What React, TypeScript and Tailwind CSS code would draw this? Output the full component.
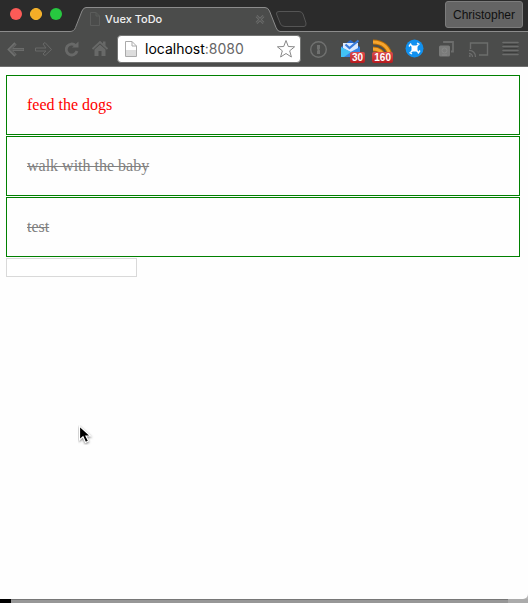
import type { ReactNode } from "react";

const todos = [
  { text: "feed the dogs", done: false },
  { text: "walk with the baby", done: true },
  { text: "test", done: true },
];

function ToolIcon({ x, width, children, badge }: { x: number; width: number; children: ReactNode; badge?: string }) {
  return (
    <span className="relative block h-[34px] shrink-0">
      <svg className="block" width={width} height={34} viewBox={`${x} 32 ${width} 34`} fill="none">
        {children}
      </svg>
      {badge && (
        <span className="absolute right-[4px] bottom-[3px] h-[11px] rounded-[2px] bg-gradient-to-b from-[#dc4a4c] to-[#b8191e] px-[2px] font-['Liberation_Sans',sans-serif] text-[10px] leading-[11px] font-bold text-white">
          {badge}
        </span>
      )}
    </span>
  );
}

function TitleBar() {
  return (
    <header className="relative flex h-8 items-start bg-[#2b2b2b]">
      <svg className="absolute inset-0" width="528" height="32" viewBox="0 0 528 32" fill="none">
        <path d="M71 32C74 31 75 29 76 27L82 11Q83.500 7.500 86 7.500H265Q268 7.500 269.500 11L276 27Q277.500 31 280 32Z" fill="#4b4c4b" />
        <path d="M0 31.500H70C73 31.500 74.500 30 75.500 27.500L82 11Q83.500 7.500 86 7.500H265Q268 7.500 269.500 11L276 27.500Q277.500 31.500 280 31.500H528" stroke="#8c8c8c" />
        <path d="M279 11.500H299Q302 11.500 303 14L306 23Q306.500 26.500 304 26.500H285Q281.500 26.500 280.500 24L276.500 14Q276 11.500 279 11.500Z" fill="#303030" stroke="#555" />
      </svg>
      <div className="relative flex w-[90px] gap-2 pt-2 pl-[10px]">
        <span className="size-3 rounded-full bg-[#fc5b57]" />
        <span className="size-3 rounded-full border border-[#fdbc2f] bg-[#f5ad27]" />
        <span className="size-3 rounded-full bg-[#27c840]" />
      </div>
      <div className="relative flex h-8 w-[175px] items-start">
        <svg className="mt-3" width="10" height="14" viewBox="0 0 10 14" fill="none" stroke="#5b5c5b">
          <path d="M.5.5H6L9.500 4V13.500H.5ZM6 .5V4H9.500" />
        </svg>
        <span className="mt-[11px] ml-[5px] text-[11px] leading-4 font-medium text-[#f1f1f1]">Vuex ToDo</span>
        <svg className="mt-[15px] ml-auto" width="10" height="9" viewBox="0 0 10 9" fill="none">
          <path d="M1.500 1L8.500 8M8.500 1L1.500 8" stroke="#6c6d6c" strokeWidth="2.600" />
          <path d="M1.500 1L8.500 8M8.500 1L1.500 8" stroke="#474847" strokeWidth="1" />
        </svg>
      </div>
      <button className="relative mt-[1px] mr-[5px] ml-auto h-[27px] w-[78px] rounded-[3px] border border-[#7c7c7c] bg-[#646464] font-['Liberation_Sans',sans-serif] text-[12px] leading-[26px] text-[#101010]">
        Christopher
      </button>
    </header>
  );
}

function Toolbar() {
  return (
    <nav className="flex h-[35px] items-start border-b border-[#707070] bg-[#4b4c4b]">
      <ToolIcon x={0} width={29}>
        <path d="M24 49.500H9.500M15.500 43.500L9.500 49.500L15.500 55.500" stroke="#6f706f" strokeWidth="3.200" />
        <path d="M23.500 49.500H10.500M15.500 44.500L10.500 49.500L15.500 54.500" stroke="#5b5c5b" strokeWidth="1.600" />
      </ToolIcon>
      <ToolIcon x={29} width={29}>
        <path d="M35.500 48H46L43 44L45 42.500L51.500 49.500L45 55.500L43 54L46 51H35.500Z" stroke="#686968" />
      </ToolIcon>
      <ToolIcon x={58} width={29}>
        <path d="M75.500 45.500A5.500 5.500 0 1 0 77 51" stroke="#686968" strokeWidth="2.800" />
        <path d="M72 47.500H78.500V41.500Z" fill="#686968" />
      </ToolIcon>
      <ToolIcon x={87} width={27}>
        <path d="M92.500 49L100 42L107.500 49" stroke="#686968" strokeWidth="1.800" />
        <path d="M94.500 49.500L100 44.500L105.500 49.500V56H101.500V51H98.500V56H94.500ZM103 41.500H105.500V46L103 44Z" fill="#686968" />
      </ToolIcon>
      <div className="mt-[3px] ml-[3px] flex h-[28px] w-[184px] shrink-0 items-center rounded-[4px] border border-[#747574] bg-white pr-[4px] pl-[7px]">
        <svg width="12" height="16" viewBox="0 0 12 16" fill="none">
          <path d="M.5 9H11.500V15H.5Z" fill="#ddd" />
          <path d="M.5.5H7L11.500 5V15.500H.5ZM7 .5V5H11.500" stroke="#aaa" />
        </svg>
        <span className="ml-[8px] text-[14px] leading-5 text-black">
          localhost<span className="text-[#666]">:8080</span>
        </span>
        <svg className="ml-auto" width="20" height="20" viewBox="0 0 20 20" fill="none">
          <path d="M10 1.500L12.300 7.500L18.600 7.800L13.700 11.800L15.400 18L10 14.500L4.600 18L6.300 11.800L1.400 7.800L7.700 7.500Z" stroke="#888" />
        </svg>
      </div>
      <ToolIcon x={301} width={34}>
        <circle cx="318.500" cy="49.500" r="7.800" stroke="#707170" strokeWidth="1.400" />
        <path d="M317 45H320V48.500L319.300 49.500L320 50.500V54H317V51L317.700 50L317 49Z" fill="#707170" />
      </ToolIcon>
      <ToolIcon x={335} width={34} badge="30">
        <path d="M341 47L350.500 40L360 47V57H341Z" fill="#2769cf" />
        <path d="M343 43H358V51L350.500 55L343 51Z" fill="#dceaff" />
        <path d="M345.500 44.500L349.500 48L358.500 40.500" stroke="#397bdc" strokeWidth="2.200" />
        <path d="M341 47L350.500 52L360 47V57H341Z" fill="#3784e3" />
        <path d="M341 47L351 52L344 57H341Z" fill="#42c2f5" />
      </ToolIcon>
      <ToolIcon x={369} width={28} badge="160">
        <path d="M373 42C383 42 389.500 48 390 57M373 49C379 49 383 52 383 57" stroke="#b96d05" strokeWidth="5" />
        <path d="M373 42C383 42 389.500 48 390 57M373 49C379 49 383 52 383 57" stroke="#f7a52e" strokeWidth="3" />
      </ToolIcon>
      <ToolIcon x={397} width={34}>
        <circle cx="414.500" cy="48.500" r="9" fill="#1191ef" />
        <rect x="411.500" y="45.500" width="6" height="6" rx="1" fill="white" />
        <path d="M410.500 44.500L418.500 52.500M418.500 44.500L410.500 52.500" stroke="white" strokeWidth="1.400" />
        <path d="M409 46.500L411 43.500M417 43L419.500 44.500M420 50.500L418 53.500M412 54L409.500 52.500" stroke="white" strokeWidth="1.400" />
      </ToolIcon>
      <ToolIcon x={431} width={31}>
        <path d="M444 43V42H453V51.500H451" stroke="#6c6d6c" strokeWidth="1.800" />
        <rect x="439" y="45.500" width="11" height="11" rx="1.500" fill="#7a7b7a" />
        <circle cx="444.500" cy="50.500" r="2.500" stroke="#888988" />
        <path d="M442 55H447" stroke="#888988" />
      </ToolIcon>
      <ToolIcon x={462} width={33}>
        <path d="M470.500 49V43H487.500V55H479" stroke="#6c6d6c" strokeWidth="1.400" />
        <path d="M469 50.500A6 6 0 0 1 475.500 57M469 53.500A3.500 3.500 0 0 1 472.500 57" stroke="#6c6d6c" strokeWidth="1.300" />
        <circle cx="469.800" cy="56" r="1" fill="#6c6d6c" />
      </ToolIcon>
      <ToolIcon x={495} width={33}>
        <path d="M503 42.500H518M503 46.500H518M503 50.500H518M503 54.500H518" stroke="#6c6d6c" strokeWidth="1.600" strokeLinecap="round" />
        <path d="M503.500 44.500H517.500M503.500 48.500H517.500M503.500 52.500H517.500" stroke="#3c3d3c" />
      </ToolIcon>
    </nav>
  );
}

export default function App() {
  return (
    <div className="relative flex h-[603px] w-[528px] flex-col overflow-hidden bg-[#b5b5b5] font-[Inter,'Liberation_Sans',sans-serif]">
      <div className="flex h-[599px] flex-col overflow-hidden rounded-br-[5px] bg-[#fefefe]">
        <TitleBar />
        <Toolbar />
        <main className="flex flex-col items-start pt-2 pl-[6px] font-['Liberation_Serif',serif]">
          <ul className="flex flex-col gap-px">
            {todos.map(({ text, done }) => (
              <li
                key={text}
                className={`h-[60px] w-[514px] border border-[#008000] px-5 pt-5 text-[16px] leading-[18px] ${done ? "text-[#808080] line-through" : "text-[#ff0000]"}`}
              >
                {text}
              </li>
            ))}
          </ul>
          <input aria-label="New todo" className="mt-px h-[19px] w-[131px] border border-[#d9d9d9] bg-white px-1 text-xs outline-none" />
        </main>
      </div>
      <footer className="flex h-1">
        <span className="w-[11px] bg-black" />
        <span className="flex-1 border-t border-[#777] bg-[#979797]" />
        <span className="w-5 bg-[#ababab]" />
      </footer>
      <svg className="absolute top-[425px] left-[78px]" width="16" height="20" viewBox="0 0 16 20">
        <path d="M1.500 1V15L5 11.800L7.500 17.500L10.500 16L8 11H12.500Z" fill="black" stroke="#fff" strokeWidth="1.200" className="drop-shadow-[0_1px_1px_rgba(0,0,0,0.5)]" />
      </svg>
    </div>
  );
}
